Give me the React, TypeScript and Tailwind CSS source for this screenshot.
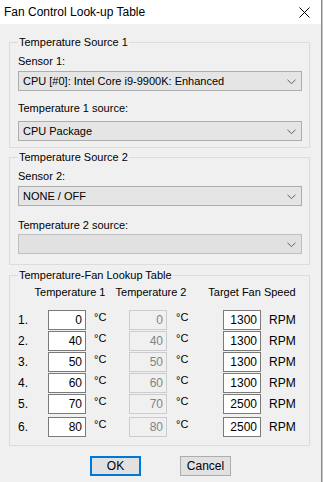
import { ReactNode } from "react";

const font = { fontFamily: '"Liberation Sans", Arial, sans-serif' };

function Chevron() {
	return (
		<svg width="9" height="6" viewBox="0 0 9 6" className="absolute right-[5px] top-[7px]">
			<path d="M0.5 0.8 L4.5 4.6 L8.5 0.8" fill="none" stroke="#606060" strokeWidth="1" />
		</svg>
	)
}

function Select({ value, disabled }: { value?: string; disabled?: boolean }) {
	return (
		<div
			className={
				"relative h-[20px] w-[284px] border pl-[4px] text-[11px] leading-[18px] " +
				(disabled ? "border-[#bfbfbf] bg-[#e1e1e1]" : "border-[#adadad] bg-[#e5e5e5] text-black")
			}
		>
			{value}
			<Chevron />
		</div>
	)
}

function Group({ title, children, className }: { title: string; children: ReactNode; className?: string }) {
	return (
		<fieldset className={"w-[301px] border border-[#dcdcdc] pl-[8px] pr-[6px] " + (className ?? "")}>
			<legend className="px-[1px] text-[11px] leading-[13px] text-black">{title}</legend>
			{children}
		</fieldset>
	)
}

function NumBox({ value, disabled }: { value: number; disabled?: boolean }) {
	return (
		<div
			className={
				"h-[20px] w-[38px] border pr-[3px] text-right text-[12px] leading-[18px] " +
				(disabled ? "border-[#cccccc] bg-[#f0f0f0] text-[#838383]" : "border-[#7a7a7a] bg-white text-black")
			}
		>
			{value}
		</div>
	)
}

const rows = [
	{ t1: 0, t2: 0, rpm: 1300 },
	{ t1: 40, t2: 40, rpm: 1300 },
	{ t1: 50, t2: 50, rpm: 1300 },
	{ t1: 60, t2: 60, rpm: 1300 },
	{ t1: 70, t2: 70, rpm: 2500 },
	{ t1: 80, t2: 80, rpm: 2500 },
]

export default function App() {
	return (
		<div className="flex h-[482px] w-[323px] bg-[#f0f0f0]" style={font}>
			<div className="flex w-[321px] flex-col">
				{/* title bar */}
				<div className="flex h-[24px] items-center justify-between bg-white pl-[4px] pr-[11px]">
					<span className="text-[12px] text-black">Fan Control Look-up Table</span>
					<svg width="11" height="11" viewBox="0 0 11 11">
						<path d="M0.5 0.5 L10.5 10.5 M10.5 0.5 L0.5 10.5" stroke="#000" strokeWidth="1" />
					</svg>
				</div>

				<div className="flex flex-col pl-[9px] pt-[12px]">
					<Group title="Temperature Source 1" className="pb-[6px]">
						<div className="mt-[6px] text-[11px] leading-[13px] text-black">Sensor 1:</div>
						<div className="mt-[3px]">
							<Select value="CPU [#0]: Intel Core i9-9900K: Enhanced" />
						</div>
						<div className="mt-[11px] text-[11px] leading-[13px] text-black">Temperature 1 source:</div>
						<div className="mt-[6px]">
							<Select value="CPU Package" />
						</div>
					</Group>

					<Group title="Temperature Source 2" className="mt-[3px] pb-[10px]">
						<div className="mt-[6px] text-[11px] leading-[13px] text-black">Sensor 2:</div>
						<div className="mt-[3px]">
							<Select value="NONE / OFF" />
						</div>
						<div className="mt-[13px] text-[11px] leading-[13px] text-black">Temperature 2 source:</div>
						<div className="mt-[2px]">
							<Select disabled />
						</div>
					</Group>

					<Group title="Temperature-Fan Lookup Table" className="mt-[4px] pb-[8px]">
						<div className="mt-[4px] flex whitespace-nowrap text-[11px] leading-[13px] text-black">
							<span className="ml-[12px] w-[80px] text-center">Temperature 1</span>
							<span className="ml-[1px] w-[80px] text-center">Temperature 2</span>
							<span className="ml-[16px] w-[90px] text-center">Target Fan Speed</span>
						</div>
						<div className="mt-[11px] flex flex-col gap-[1px]">
							{rows.map((r, i) => (
								<div key={i} className={"flex h-[20px] items-center text-[12px] text-black " + (i === 5 ? "mt-[2px]" : "")}>
									<span className="w-[30px] leading-[20px]">{i + 1}.</span>
									<NumBox value={r.t1} />
									<span className="ml-[8px] w-[35px] self-start text-[11px] leading-[14px]">°C</span>
									<NumBox value={r.t2} disabled />
									<span className="ml-[9px] w-[47px] self-start text-[11px] leading-[14px]">°C</span>
									<NumBox value={r.rpm} />
									<span className="ml-[8px] leading-[20px]">RPM</span>
								</div>
							))}
						</div>
					</Group>

					<div className="mt-[10px] flex text-[12px] text-black">
						<button className="ml-[81px] h-[20px] w-[51px] border-2 border-[#0078d7] bg-[#e1e1e1] leading-[16px]">OK</button>
						<button className="ml-[39px] h-[20px] w-[51px] border border-[#adadad] bg-[#e1e1e1] leading-[18px]">Cancel</button>
					</div>
				</div>
			</div>
			<div className="w-[1px] bg-[#8a8a8a]" />
			<div className="w-[1px] bg-[#c4c4c4]" />
		</div>
	);
}
